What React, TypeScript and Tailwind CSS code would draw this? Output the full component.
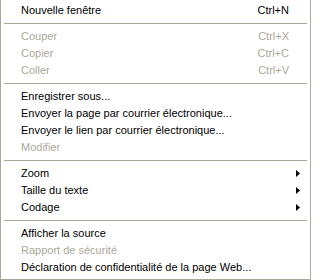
import React from "react";

type Item =
  | { kind: "sep" }
  | { kind: "item"; label: string; shortcut?: string; disabled?: boolean; sub?: boolean };

const items: Item[] = [
  { kind: "item", label: "Nouvelle fenêtre", shortcut: "Ctrl+N" },
  { kind: "sep" },
  { kind: "item", label: "Couper", shortcut: "Ctrl+X", disabled: true },
  { kind: "item", label: "Copier", shortcut: "Ctrl+C", disabled: true },
  { kind: "item", label: "Coller", shortcut: "Ctrl+V", disabled: true },
  { kind: "sep" },
  { kind: "item", label: "Enregistrer sous..." },
  { kind: "item", label: "Envoyer la page par courrier électronique..." },
  { kind: "item", label: "Envoyer le lien par courrier électronique..." },
  { kind: "item", label: "Modifier", disabled: true },
  { kind: "sep" },
  { kind: "item", label: "Zoom", sub: true },
  { kind: "item", label: "Taille du texte", sub: true },
  { kind: "item", label: "Codage", sub: true },
  { kind: "sep" },
  { kind: "item", label: "Afficher la source" },
  { kind: "item", label: "Rapport de sécurité", disabled: true },
  { kind: "item", label: "Déclaration de confidentialité de la page Web..." },
];

export default function App() {
  return (
    <div
      className="w-[311px] h-[280px] bg-white border-l border-r border-b border-[#aca899] pt-[2px] pb-[3px] text-[11px] leading-[17px] text-black"
      style={{ fontFamily: '"Liberation Sans", Arial, sans-serif' }}
    >
      {items.map((it, i) =>
        it.kind === "sep" ? (
          <div key={i} className="h-[9px] flex items-start pt-[4px] px-[3px]">
            <div className="h-px w-full bg-[#aca899]" />
          </div>
        ) : (
          <div
            key={i}
            className={`h-[17px] flex items-center pl-[20px] pr-[9px] ${
              it.disabled ? "text-[#aca899]" : "text-black"
            }`}
          >
            <span className="flex-1 whitespace-nowrap">{it.label}</span>
            {it.shortcut && <span className="mr-[12px]">{it.shortcut}</span>}
            {it.sub && (
              <svg width="4" height="7" viewBox="0 0 4 7" className="mr-[1px]">
                <path d="M0 0 L4 3.5 L0 7 Z" fill="#000" />
              </svg>
            )}
          </div>
        )
      )}
    </div>
  );
}
